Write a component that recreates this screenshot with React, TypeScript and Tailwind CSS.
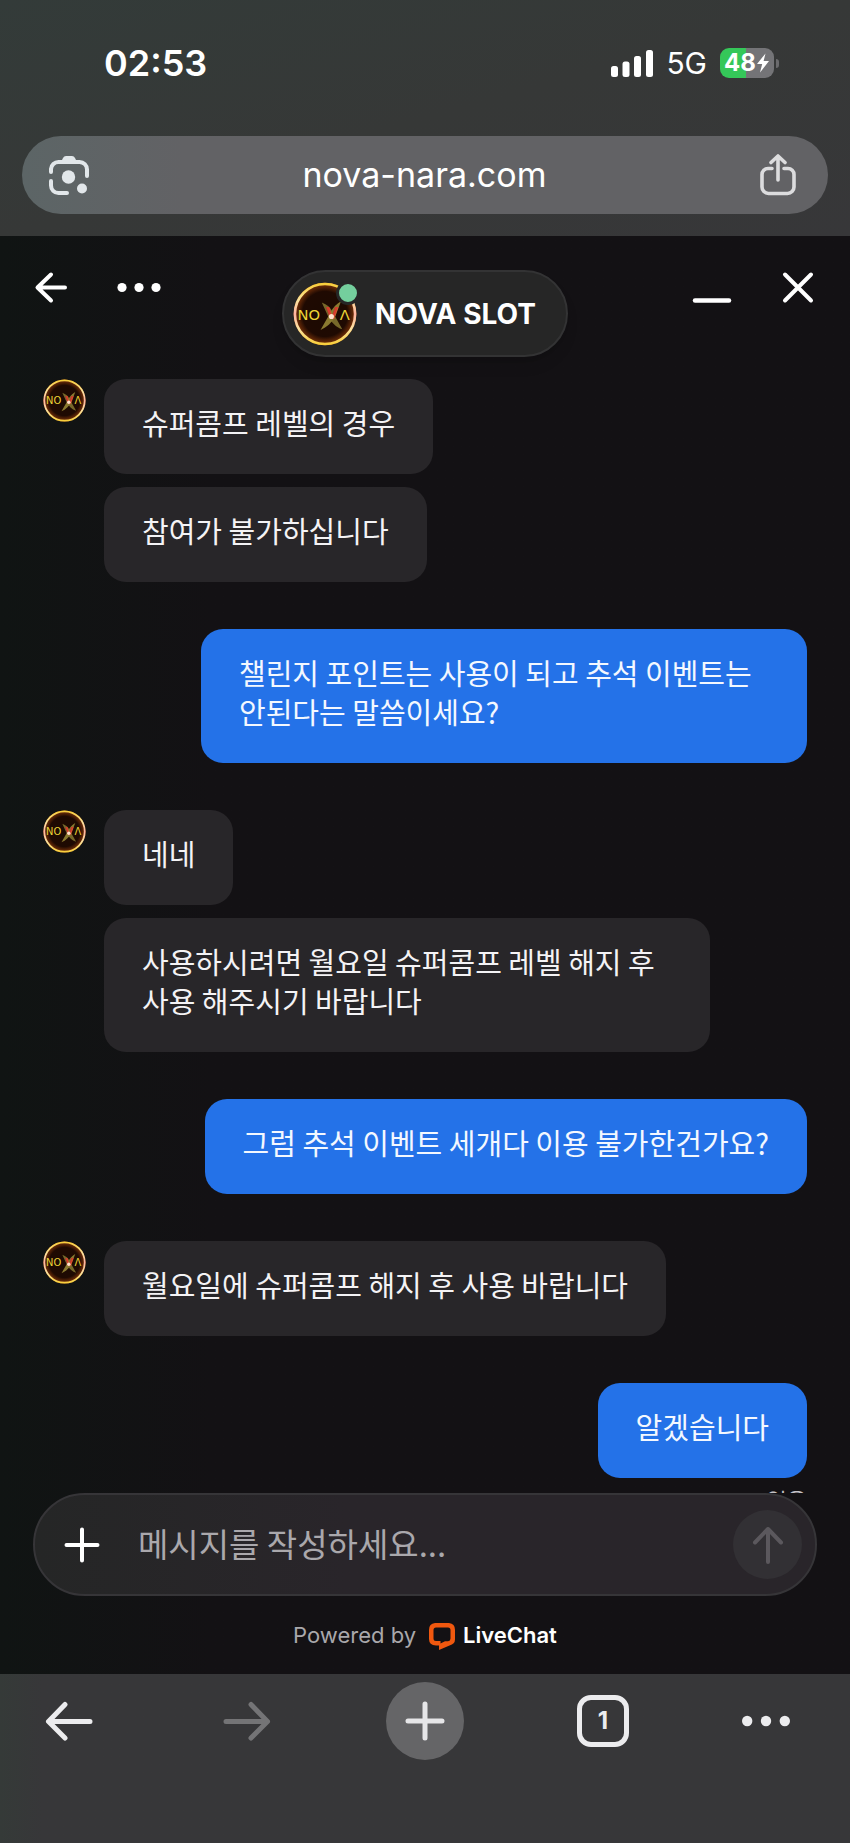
type Message = { from: "agent" | "me"; lines: string[] };

const messages: Message[] = [
  { from: "agent", lines: ["슈퍼콤프 레벨의 경우", "참여가 불가하십니다"] },
  { from: "me", lines: ["챌린지 포인트는 사용이 되고 추석 이벤트는 안된다는 말씀이세요?"] },
  { from: "agent", lines: ["네네", "사용하시려면 월요일 슈퍼콤프 레벨 해지 후 사용 해주시기 바랍니다"] },
  { from: "me", lines: ["그럼 추석 이벤트 세개다 이용 불가한건가요?"] },
  { from: "agent", lines: ["월요일에 슈퍼콤프 해지 후 사용 바랍니다"] },
  { from: "me", lines: ["알겠습니다"] },
];

function NovaLogo({ className }: { className: string }) {
  return (
    <svg viewBox="0 0 100 100" className={className} role="img" aria-label="NOVA">
      <defs>
        <radialGradient id="nova-fill">
          <stop offset="0" stopColor="#1c0a02" />
          <stop offset="0.72" stopColor="#1f0a02" />
          <stop offset="0.92" stopColor="#6b2c08" />
          <stop offset="1" stopColor="#a8500f" />
        </radialGradient>
        <linearGradient id="nova-ring" x1="0" y1="0" x2="0" y2="1">
          <stop offset="0" stopColor="#f8cf3c" />
          <stop offset="0.28" stopColor="#fbe3a0" />
          <stop offset="0.5" stopColor="#ffb3a0" />
          <stop offset="0.75" stopColor="#fbe3a0" />
          <stop offset="1" stopColor="#f8cf3c" />
        </linearGradient>
      </defs>
      <circle cx="50" cy="50" r="49" fill="url(#nova-fill)" />
      <circle cx="50" cy="50" r="47" fill="none" stroke="url(#nova-ring)" strokeWidth="4" />
      <path d="M45 32 C53 35 59 40 62 47 L77 74 C67 71 60 63 55 54 Z" fill="#77682a" />
      <path d="M75 30 C68 34 62 40 59 47 L43 75 C53 71 61 63 66 54 Z" fill="#8a7a30" />
      <g fontFamily="DejaVu Sans, sans-serif" fontSize="23" fill="#ecd436">
        <text x="7" y="59">NO</text>
        <text x="51" y="58" fontSize="25" fontWeight="bold" fill="#d63c2c">V</text>
        <text x="73" y="59">Λ</text>
      </g>
      <circle cx="60" cy="54" r="4" fill="#ffe3cc" />
    </svg>
  );
}

function StatusBar() {
  return (
    <div className="flex h-[136px] items-center justify-between pr-[71px] pb-[10px] pl-[104px]">
      <time className="text-[36px] leading-[44px] font-semibold">02:53</time>
      <div className="flex items-center gap-[13px]">
        <svg viewBox="0 0 42 27" className="h-[27px] w-[42px] fill-white" aria-hidden="true">
          <rect x="0" y="16" width="7" height="11" rx="2.5" />
          <rect x="11.5" y="11.5" width="7" height="15.5" rx="2.5" />
          <rect x="23" y="6" width="7" height="21" rx="2.5" />
          <rect x="35" y="0" width="7" height="27" rx="2.5" />
        </svg>
        <span className="text-[30px] leading-9">5G</span>
        <div className="flex items-center gap-[2px]">
          <div className="flex h-[30px] w-[54px] items-center justify-center rounded-[9px] bg-linear-to-r from-[#35c759] from-48% to-[#747477] to-48%">
            <span className="text-2xl leading-[30px] font-bold">48</span>
            <svg viewBox="0 0 14 20" className="h-5 w-[14px] fill-white" aria-hidden="true">
              <path d="M9.5 0.5 L1 11 H6.2 L4 19.5 L13 8 H7.6 Z" />
            </svg>
          </div>
          <span className="h-[9px] w-[3px] rounded-r-full bg-[#6b6b6d]" />
        </div>
      </div>
    </div>
  );
}

function AddressBar() {
  return (
    <div className="mx-[22px] mb-[22px] flex h-[78px] items-center rounded-full bg-linear-to-r from-[#5c6566] to-[#626265] to-20% pr-[31px] pl-[26px]">
      <button type="button" aria-label="Search with camera">
        <svg viewBox="0 0 42 42" className="size-[42px]" fill="none" aria-hidden="true">
          <g stroke="#e2e7ea" strokeWidth="4" strokeLinecap="round">
            <path d="M3 18 V15 A7.5 7.5 0 0 1 10.5 8 H31.5 A7.5 7.5 0 0 1 39 15.5 V22" />
            <path d="M3 27 V31.5 A7.5 7.5 0 0 0 10.5 39 H19" />
          </g>
          <path d="M12.5 9 L15 4 Q16 2 18 2 H24 Q26 2 27 4 L29.5 9 Z" fill="#e2e7ea" />
          <circle cx="20.5" cy="23" r="6.7" fill="#e2e7ea" />
          <circle cx="34" cy="34.5" r="5" fill="#e2e7ea" />
        </svg>
      </button>
      <input
        type="text"
        aria-label="Address"
        defaultValue="nova-nara.com"
        className="min-w-0 flex-1 bg-transparent text-center text-[34px] leading-[44px] outline-none"
      />
      <button type="button" aria-label="Share">
        <svg
          viewBox="0 0 38 42"
          className="h-[42px] w-[38px]"
          fill="none"
          stroke="#dcdcde"
          strokeWidth="3.6"
          strokeLinecap="round"
          strokeLinejoin="round"
          aria-hidden="true"
        >
          <path d="M13 14.5 H9 A6 6 0 0 0 3 20.5 V33 A6.5 6.5 0 0 0 9.5 39.5 H28.5 A6.5 6.5 0 0 0 35 33 V20.5 A6 6 0 0 0 29 14.5 H25" />
          <path d="M19 26 V2.5 M12 8.5 L19 2 L26 8.5" />
        </svg>
      </button>
    </div>
  );
}

function ChatHeader() {
  return (
    <header className="grid shrink-0 grid-cols-[1fr_auto_1fr] items-start px-[34px] pt-[34px]">
      <div className="flex gap-[48px]">
        <button type="button" aria-label="Back">
          <svg viewBox="0 0 34 34" className="size-[34px]" fill="none" stroke="white" strokeWidth="4" strokeLinecap="round" strokeLinejoin="round" aria-hidden="true">
            <path d="M31 17.5 H4 M17 4.5 L3.5 17.5 L17 30.5" />
          </svg>
        </button>
        <button type="button" aria-label="Menu">
          <svg viewBox="0 0 46 34" className="h-[34px] w-[46px] fill-white" aria-hidden="true">
            <circle cx="6" cy="17.5" r="4.6" />
            <circle cx="23" cy="17.5" r="4.6" />
            <circle cx="40" cy="17.5" r="4.6" />
          </svg>
        </button>
      </div>
      <div className="flex h-[87px] items-center gap-[18px] rounded-full border-2 border-[#333334] bg-[#262626] pr-[30px] pl-[9px] shadow-lg">
        <div className="relative">
          <NovaLogo className="size-16" />
          <span className="absolute -top-[1px] -right-[3px] size-[24px] rounded-full border-[3px] border-[#262626] bg-[#74cf9d]" />
        </div>
        <h1 className="text-[28px] leading-9 font-bold">NOVA SLOT</h1>
      </div>
      <div className="flex justify-end gap-[48px]">
        <button type="button" aria-label="Minimize">
          <svg viewBox="0 0 42 34" className="h-[34px] w-[42px]" stroke="white" strokeWidth="4.5" strokeLinecap="round" aria-hidden="true">
            <path d="M3 30.5 H37" />
          </svg>
        </button>
        <button type="button" aria-label="Close">
          <svg viewBox="0 0 34 34" className="size-[34px]" stroke="white" strokeWidth="4" strokeLinecap="round" aria-hidden="true">
            <path d="M3 4.5 L29 30.5 M29 4.5 L3 30.5" />
          </svg>
        </button>
      </div>
    </header>
  );
}

function MessageGroup({ message }: { message: Message }) {
  if (message.from === "me") {
    return (
      <div className="flex flex-col items-end">
        {message.lines.map((line) => (
          <p key={line} className="max-w-[606px] rounded-[22px] bg-[#2472e8] px-[38px] pt-6 pb-8 text-[#f3f8ff]">
            {line}
          </p>
        ))}
      </div>
    );
  }
  return (
    <div className="flex items-start gap-[18px]">
      <NovaLogo className="size-[43px] shrink-0" />
      <div className="flex flex-col items-start gap-[13px]">
        {message.lines.map((line) => (
          <p key={line} className="max-w-[606px] rounded-[22px] bg-[#282629] px-[38px] pt-6 pb-8 text-[#f4f3f5]">
            {line}
          </p>
        ))}
      </div>
    </div>
  );
}

function Composer() {
  return (
    <form className="mx-[33px] flex h-[103px] shrink-0 items-center rounded-full border-2 border-[#363538] bg-linear-to-r from-[#252626] to-[#29252a] to-40% pr-[13px] pl-[28px]">
      <button type="button" aria-label="Attach">
        <svg viewBox="0 0 38 38" className="size-[38px]" stroke="white" strokeWidth="4" strokeLinecap="round" aria-hidden="true">
          <path d="M19 3.5 V34.5 M3.5 19 H34.5" />
        </svg>
      </button>
      <input
        type="text"
        aria-label="메시지"
        placeholder="메시지를 작성하세요..."
        className="min-w-0 flex-1 bg-transparent pb-1 pl-[37px] font-['Noto_Sans_CJK_KR',sans-serif] text-[33px] leading-[48px] outline-none placeholder:text-[#aaa8ac]"
      />
      <button type="submit" aria-label="Send" className="flex size-[69px] items-center justify-center rounded-full bg-[#323034]">
        <svg viewBox="0 0 34 40" className="h-10 w-[34px]" fill="none" stroke="#5b585d" strokeWidth="4" strokeLinecap="round" strokeLinejoin="round" aria-hidden="true">
          <path d="M17 37 V4 M4 17.5 L17 4 L30 17.5" />
        </svg>
      </button>
    </form>
  );
}

function PoweredBy() {
  return (
    <footer className="flex h-[78px] shrink-0 items-center justify-center gap-3">
      <span className="text-[22px] leading-7 text-[#a9a8ab]">Powered by</span>
      <a href="#livechat" className="flex items-center gap-[7px]">
        <svg viewBox="0 0 28 28" className="mt-[2px] size-7" fill="#f0580f" fillRule="evenodd" aria-hidden="true">
          <path d="M7 1 H21 Q27 1.5 27 8 V17.5 Q27 22 21.5 23.5 L11 28 V23.5 H8 Q1 23 1 17 V8 Q1 1.5 7 1 Z M8 5.5 Q5.5 5.5 5.5 8 V16.5 Q5.5 19 8 19 H12.5 V21.5 L17 19.2 H20 Q22.5 19 22.5 16.5 V8 Q22.5 5.5 20 5.5 Z" />
        </svg>
        <span className="text-[22px] leading-7 font-semibold">LiveChat</span>
      </a>
    </footer>
  );
}

function BrowserToolbar() {
  return (
    <nav className="flex h-[169px] shrink-0 items-start justify-between bg-linear-to-r from-[#353a38] to-[#373739] to-5% px-[30px] pt-2">
      <button type="button" aria-label="Back" className="flex size-[78px] items-center justify-center">
        <svg viewBox="0 0 48 40" className="h-10 w-12" fill="none" stroke="#ececee" strokeWidth="5" strokeLinecap="round" strokeLinejoin="round" aria-hidden="true">
          <path d="M45 20.5 H5 M20 3.5 L3.5 20.5 L20 37" />
        </svg>
      </button>
      <button type="button" aria-label="Forward" className="flex size-[78px] items-center justify-center">
        <svg viewBox="0 0 48 40" className="h-10 w-12" fill="none" stroke="#747476" strokeWidth="5" strokeLinecap="round" strokeLinejoin="round" aria-hidden="true">
          <path d="M3 20.5 H43 M28 3.5 L44.5 20.5 L28 37" />
        </svg>
      </button>
      <button type="button" aria-label="New tab" className="flex size-[78px] items-center justify-center rounded-full bg-[#656567]">
        <svg viewBox="0 0 40 40" className="size-10" stroke="#e6e6e8" strokeWidth="5" strokeLinecap="round" aria-hidden="true">
          <path d="M20 3 V37 M3 20 H37" />
        </svg>
      </button>
      <button type="button" aria-label="Tabs" className="flex size-[78px] items-center justify-center">
        <span className="flex size-[52px] items-center justify-center rounded-[14px] border-5 border-[#ececee] text-2xl font-bold text-[#ececee]">1</span>
      </button>
      <button type="button" aria-label="More" className="flex size-[78px] items-center justify-start">
        <svg viewBox="0 0 48 12" className="h-3 w-12 fill-[#ececee]" aria-hidden="true">
          <circle cx="5.2" cy="6" r="5.2" />
          <circle cx="24" cy="6" r="5.2" />
          <circle cx="42.8" cy="6" r="5.2" />
        </svg>
      </button>
    </nav>
  );
}

export default function App() {
  return (
    <div className="flex h-screen flex-col bg-[#121113] font-['Inter','Noto_Sans_CJK_KR',sans-serif] text-white">
      <div className="shrink-0 bg-linear-to-br from-[#333b39] via-[#363837] to-[#373739]">
        <StatusBar />
        <AddressBar />
      </div>
      <div className="flex min-h-0 flex-1 flex-col bg-linear-to-r from-[#101413] to-[#131114] to-25%">
        <ChatHeader />
        <main className="min-h-0 flex-1 overflow-hidden px-[43px] pt-[22px] font-['Noto_Sans_CJK_KR',sans-serif] text-[29px] leading-[39px]">
          <div className="flex flex-col gap-[47px]">
            {messages.map((message) => (
              <MessageGroup key={message.lines[0]} message={message} />
            ))}
          </div>
          <p className="mt-[6px] text-right text-[22px] leading-[30px] text-[#c4c2c6]">읽음</p>
        </main>
        <Composer />
        <PoweredBy />
      </div>
      <BrowserToolbar />
    </div>
  );
}
